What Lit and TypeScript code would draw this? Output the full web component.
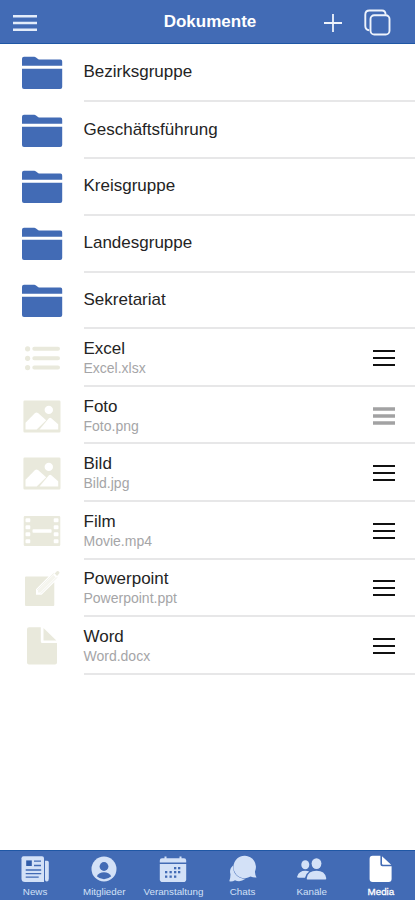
import { LitElement, html, svg, css } from "lit";
import { customElement, property } from "lit/decorators.js";

// Document icons, drawn on a 42x42 canvas.
const docIcons: Record<string, unknown> = {
  folder: svg`
    <path d="M1 13.700V6.800q0-2 2-2h10.200q1 0 1.800.6l2 1.600q.8.600 1.800.6H39.500q1.700 0 1.700 1.800V13.700z"/>
    <path d="M1 16.700h40.200V35q0 2-2 2H3q-2 0-2-2z"/>`,
  list: svg`
    <circle cx="6.600" cy="11.800" r="2.600"/><circle cx="6.600" cy="21.300" r="2.600"/><circle cx="6.600" cy="30.600" r="2.600"/>
    <path d="M13.300 11.800h23.700M13.300 21.300h23.700M13.300 30.600h23.700" stroke="currentColor" stroke-width="4" stroke-linecap="round"/>`,
  image: svg`
    <path fill-rule="evenodd" d="M3.700 5.500h34.500q1.300 0 1.300 1.300v29.400q0 1.300-1.300 1.300H3.700q-1.300 0-1.300-1.300V6.800q0-1.300 1.300-1.300zM27.800 10.700a4.200 4.200 0 1 0 0 8.400a4.200 4.200 0 1 0 0-8.400zM4.500 34.600H15.700L25.200 25.300L17 18.100Q15.400 16.800 13.800 18.300L4.500 27.800zM18.500 34.600H37.200V29.300L30.300 23.300Q29 22.200 27.700 23.500z"/>`,
  film: svg`
    <path fill-rule="evenodd" d="M4 6h34q1.300 0 1.300 1.300v27.400q0 1.300-1.300 1.300H4q-1.300 0-1.300-1.300V7.300Q2.700 6 4 6z
      M5.500 8.300h2.800q1 0 1 1v2q0 1-1 1H5.500q-1 0-1-1v-2q0-1 1-1z M5.500 15.300h2.800q1 0 1 1v2q0 1-1 1H5.500q-1 0-1-1v-2q0-1 1-1z
      M5.500 22.300h2.800q1 0 1 1v2q0 1-1 1H5.500q-1 0-1-1v-2q0-1 1-1z M5.500 29.300h2.800q1 0 1 1v2q0 1-1 1H5.500q-1 0-1-1v-2q0-1 1-1z
      M33.700 8.300h2.800q1 0 1 1v2q0 1-1 1h-2.800q-1 0-1-1v-2q0-1 1-1z M33.700 15.300h2.800q1 0 1 1v2q0 1-1 1h-2.800q-1 0-1-1v-2q0-1 1-1z
      M33.700 22.300h2.800q1 0 1 1v2q0 1-1 1h-2.800q-1 0-1-1v-2q0-1 1-1z M33.700 29.300h2.800q1 0 1 1v2q0 1-1 1h-2.800q-1 0-1-1v-2q0-1 1-1z
      M12.300 19.300h17.500q.8 0 .8.800v1.800q0 .8-.8.800H12.300q-.8 0-.8-.8v-1.800q0-.8.800-.8z"/>`,
  edit: svg`
    <path d="M5 9.500H27.600L15 22.200V27.800H20.600L33.300 15.200V38q0 1-1 1H5q-1 0-1-1V10.500q0-1 1-1z"/>
    <path d="M17 23.200L32.300 7.900L34.700 10.300L19.400 25.600H17z" fill="#f5f5ee"/>
    <path d="M16.300 22.900L33 6.200M19.900 26.500L36 10.400" fill="none" stroke="currentColor" stroke-width=".7"/>
    <path d="M33.700 6.500L35.900 4.300Q36.900 3.500 37.900 4.400Q39 5.500 38.200 6.600L36.100 8.900z"/>`,
  page: svg`
    <path d="M8 2.200H19.800V16.500q0 1.600 1.600 1.600H36V37.500q0 2-2 2H8q-2 0-2-2V4.200q0-2 2-2z"/>
    <path d="M22.500 2.900L35.300 15.500H22.500z"/>`,
};

// Tab bar icons, drawn on a 30x28 canvas.
const tabIcons: Record<string, unknown> = {
  news: svg`
    <path d="M3.500 1.300h18.500q2 0 2 2V27H5q-3.500 0-3.500-3.500V3.300q0-2 2-2z"/>
    <path d="M25 5.800h2.300q1.500 0 1.500 1.500v16.500q0 2.700-2 2.700T25 23.800z"/>
    <path d="M14 6.200h7M14 10.500h7M5.700 15h15.500M5.700 18.600h15.500M5.700 22.200h13" fill="none" stroke="#426bb5" stroke-width="1.300"/>
    <rect x="6.200" y="5.400" width="5.600" height="5.600" fill="#315da9"/>`,
  person: svg`
    <circle cx="15" cy="14" r="12.500"/>
    <g fill="#426bb5"><circle cx="15" cy="11.500" r="4.400"/><path d="M7.800 21.300Q10 17.200 15 17.200T22.200 21.300Q19.200 24.200 15 24.200T7.800 21.300z"/></g>`,
  calendar: svg`
    <path d="M4 3.200h2.500V1.600h2v1.600h13V1.600h2v1.600H26q2.200 0 2.200 2.200v2.200H1.800V5.400Q1.800 3.200 4 3.200z"/>
    <path d="M1.800 9h26.400v15.200q0 2.800-2.800 2.800H4.600q-2.800 0-2.800-2.800z"/>
    <g fill="#426bb5"><rect x="16" y="12" width="2.300" height="2.300"/><rect x="20" y="12" width="2.300" height="2.300"/>
      <rect x="7" y="16" width="2.300" height="2.300"/><rect x="11.500" y="16" width="2.300" height="2.300"/><rect x="16" y="16" width="2.300" height="2.300"/><rect x="20" y="16" width="2.300" height="2.300"/>
      <rect x="7" y="20.500" width="2.300" height="2.300"/><rect x="11.500" y="20.500" width="2.300" height="2.300"/><rect x="16" y="20.500" width="2.300" height="2.300"/></g>`,
  chats: svg`
    <path d="M5 10.500Q.8 14.500 2.500 19.500Q2.500 22.500 1.300 26.300Q4.700 26.700 7 25.200Q12 27.800 17.500 23.800Q5 23 5 10.500z"/>
    <path d="M17 .8A11.200 11.200 0 0 1 27 16.500Q26.800 19 28.500 22.500Q25 22.700 22.500 21.500A11.200 11.200 0 1 1 17 .8z"/>`,
  people: svg`
    <ellipse cx="19.500" cy="8.600" rx="4.900" ry="5.400"/>
    <path d="M10.500 24.600Q9.500 24.600 9.800 23Q11 15.700 19.500 15.700T29.200 23Q29.500 24.600 28.300 24.600z"/>
    <ellipse cx="8.300" cy="9.800" rx="4" ry="4.500"/>
    <path d="M1.800 22.700Q-.7 22.700.3 21.200Q2 15.700 8.300 15.700Q10.500 15.700 12.200 16.500Q8.700 18.700 8 22.700z"/>`,
  page: svg`
    <path d="M6.600 .8h7.800v8.400q0 2 2 2h9.200v12.800q0 3-3 3H6.600q-3 0-3-3V3.800q0-3 3-3z"/>
    <path d="M16 1.200L25.200 9.700H17.200q-1.200 0-1.200-1.200z"/>`,
};

interface Doc {
  icon: string;
  title: string;
  file?: string;
  muted?: boolean;
}

const docs: Doc[] = [
  { icon: "folder", title: "Bezirksgruppe" },
  { icon: "folder", title: "Geschäftsführung" },
  { icon: "folder", title: "Kreisgruppe" },
  { icon: "folder", title: "Landesgruppe" },
  { icon: "folder", title: "Sekretariat" },
  { icon: "list", title: "Excel", file: "Excel.xlsx" },
  { icon: "image", title: "Foto", file: "Foto.png", muted: true },
  { icon: "image", title: "Bild", file: "Bild.jpg" },
  { icon: "film", title: "Film", file: "Movie.mp4" },
  { icon: "edit", title: "Powerpoint", file: "Powerpoint.ppt" },
  { icon: "page", title: "Word", file: "Word.docx" },
];

const tabs = [
  { icon: "news", label: "News" },
  { icon: "person", label: "Mitglieder" },
  { icon: "calendar", label: "Veranstaltung" },
  { icon: "chats", label: "Chats" },
  { icon: "people", label: "Kanäle" },
  { icon: "page", label: "Media", active: true },
];

@customElement("doc-row")
class DocRow extends LitElement {
  @property({ attribute: false }) doc!: Doc;

  static styles = css`
    :host {
      display: flex;
      box-sizing: border-box;
      height: 56.75px;
      padding-left: 21px;
    }
    :host(.first) { height: 58.3px; }
    :host(.file) { height: 57.6px; }
    .icon {
      width: 42px;
      height: 42px;
      align-self: center;
      margin-right: 20.5px;
      fill: currentColor;
      color: #426bb5;
    }
    :host(.file) .icon { color: #e9e9dc; }
    .body {
      flex: 1;
      display: flex;
      align-items: center;
      justify-content: space-between;
      box-sizing: border-box;
      border-bottom: 2px solid #e7e7e8;
      padding-right: 19px;
    }
    .title {
      font-size: 17px;
      line-height: 20px;
      color: #242424;
    }
    .name {
      font-size: 14px;
      line-height: 18px;
      color: #a5a5a7;
    }
    :host(.file) .text { padding-top: 2px; }
    .handle { width: 24px; height: 20px; margin-top: 2px; color: #111; }
    .muted { color: #a2a2a3; }
  `;

  render() {
    const { icon, title, file, muted } = this.doc;
    return html`
      <svg class="icon" viewBox="0 0 42 42">${docIcons[icon]}</svg>
      <div class="body">
        <div class="text">
          <div class="title">${title}</div>
          ${file ? html`<div class="name">${file}</div>` : ""}
        </div>
        ${file
          ? html`<svg class="handle ${muted ? "muted" : ""}" viewBox="0 0 24 20">
              <path d="M1 3h22M1 10h22M1 17h22" stroke="currentColor" stroke-width="${muted ? 3.4 : 2}" />
            </svg>`
          : ""}
      </div>
    `;
  }
}

@customElement("app-root")
class AppRoot extends LitElement {
  static styles = css`
    :host {
      display: flex;
      flex-direction: column;
      height: 900px;
      background: #fff;
      font-family: "Liberation Sans", Arial, sans-serif;
      overflow: hidden;
    }
    .header {
      display: grid;
      grid-template-columns: 1fr auto 1fr;
      align-items: center;
      box-sizing: border-box;
      height: 44px;
      padding: 0 24px 0 12px;
      background: #426bb5;
      border-bottom: 1px solid #1f57a5;
      color: #fff;
    }
    .heading {
      font-size: 17px;
      font-weight: bold;
      line-height: 20px;
      padding: 1px 0 0 17px;
    }
    .menu { width: 26px; height: 20px; margin-top: 3px; }
    .actions {
      display: flex;
      justify-content: flex-end;
      align-items: center;
      gap: 20px;
      fill: none;
      stroke: #eef3fc;
    }
    .plus { width: 20px; height: 20px; margin-top: 2px; }
    .copy { width: 28px; height: 28px; margin-top: 1px; }
    .list { flex: 1; }
    .tabs {
      display: grid;
      grid-template-columns: repeat(6, 1fr);
      box-sizing: border-box;
      height: 50.5px;
      background: #426bb5;
      border-top: 1px solid #1f57a5;
    }
    .tab {
      display: flex;
      flex-direction: column;
      align-items: center;
      padding: 4.5px 0 0 1px;
      color: #d3e1f7;
      fill: currentColor;
    }
    .active { color: #fff; }
    .glyph { width: 30px; height: 28px; }
    .label { font-size: 9.8px; line-height: 12px; margin-top: 3px; }
    .active .label { -webkit-text-stroke: 0.3px #fff; }
  `;

  render() {
    return html`
      <header class="header">
        <svg class="menu" viewBox="0 0 26 20">
          <path d="M1 3.200h24M1 10h24M1 16.800h24" stroke="#e3ecfa" stroke-width="2.600" />
        </svg>
        <div class="heading">Dokumente</div>
        <div class="actions">
          <svg class="plus" viewBox="0 0 20 20"><path d="M10 1v18M1 10h18" stroke-width="1.800" /></svg>
          <svg class="copy" viewBox="0 0 28 28" stroke-width="1.900">
            <rect x="7.500" y="7.300" width="19" height="19.200" rx="3.800" />
            <path d="M22.500 6.800V6Q22.500 2.500 19 2.500H6.500Q2.300 2.500 2.300 6.700V18Q2.300 21.800 6.200 22.200" />
          </svg>
        </div>
      </header>
      <main class="list">
        ${docs.map((d, i) => html`<doc-row class="${d.file ? "file" : i ? "" : "first"}" .doc=${d}></doc-row>`)}
      </main>
      <nav class="tabs">
        ${tabs.map(
          (t) => html`<div class="tab ${t.active ? "active" : ""}">
            <svg class="glyph" viewBox="0 0 30 28">${tabIcons[t.icon]}</svg>
            <span class="label">${t.label}</span>
          </div>`
        )}
      </nav>
    `;
  }
}
